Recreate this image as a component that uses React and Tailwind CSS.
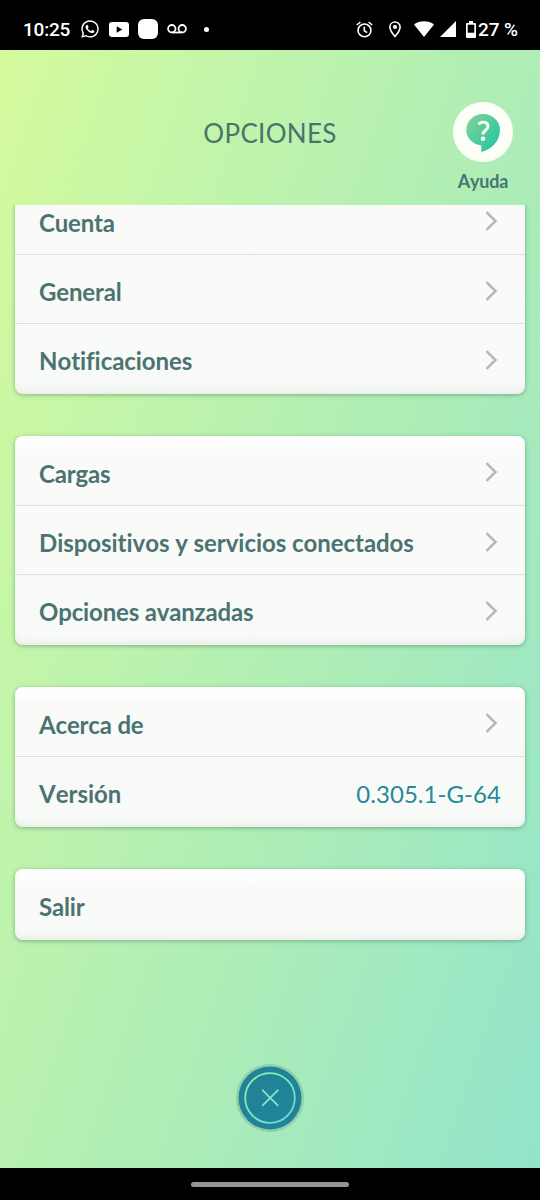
import React from "react";
import { FaWhatsapp } from "react-icons/fa";

const groups = [
  [
    { label: "Cuenta" },
    { label: "General" },
    { label: "Notificaciones", tracking: "tracking-[-0.06px]" },
  ],
  [
    { label: "Cargas" },
    { label: "Dispositivos y servicios conectados", tracking: "tracking-[-0.05px]" },
    { label: "Opciones avanzadas" },
  ],
  [
    { label: "Acerca de" },
    { label: "Versión", value: "0.305.1-G-64", tracking: "tracking-normal" },
  ],
  [{ label: "Salir", plain: true }],
];

function StatusBar() {
  return (
    <div className="flex h-[50px] shrink-0 items-center bg-black pt-[8px] pr-[22px] pl-[23px] font-['Roboto',sans-serif] text-[19px] font-medium text-white">
      <span className="w-[57px] pt-[2px] whitespace-nowrap tracking-[-0.2px]">10:25</span>
      <FaWhatsapp className="h-5 w-5 shrink-0" />
      <svg className="ml-[9px] h-[15px] w-5 shrink-0" viewBox="0 0 20 15">
        <rect width="20" height="15" rx="3" fill="#fff" />
        <path d="M7.7 4.2v6.6l5.6-3.3z" fill="#000" />
      </svg>
      <div className="ml-[9px] h-5 w-5 shrink-0 rounded-[6px] bg-white" />
      <svg className="ml-[9px] h-[10px] w-5 shrink-0" viewBox="0 0 20 10" fill="none" stroke="#fff" strokeWidth="1.8">
        <circle cx="4.8" cy="4.7" r="3.7" />
        <circle cx="15.2" cy="4.7" r="3.7" />
        <path d="M4.8 8.5h10.4" />
      </svg>
      <div className="ml-[17px] h-[5px] w-[5px] shrink-0 rounded-full bg-white" />
      <div className="flex-1" />
      <svg className="h-[17px] w-[17px] shrink-0" viewBox="0 0 17 17" fill="none" stroke="#fff" strokeWidth="1.6">
        <circle cx="8.5" cy="9.4" r="6.4" />
        <path d="M8.3 5.7v4.1l2.9 1.8M.8 4l3.6-3M16.2 4l-3.6-3" />
      </svg>
      <svg className="ml-[16px] h-[17px] w-[12px] shrink-0" viewBox="0 0 12 17">
        <path d="M6 1C3.1 1 .9 3.2.9 6c0 3.7 5.1 9.5 5.1 9.5S11.1 9.7 11.1 6C11.1 3.2 8.900 1 6 1z" fill="none" stroke="#fff" strokeWidth="1.6" />
        <circle cx="6" cy="6" r="2.1" fill="#fff" />
      </svg>
      <svg className="ml-[13px] h-[16px] w-[20px] shrink-0" viewBox="0 0 20 16">
        <path d="M0 3.500C5.500-.9 14.500-.9 20 3.500L10 16z" fill="#fff" />
      </svg>
      <svg className="ml-[6px] h-[16px] w-[16px] shrink-0" viewBox="0 0 16 16">
        <path d="M16 0v16H0z" fill="#fff" />
      </svg>
      <svg className="ml-[10px] h-[17px] w-[10px] shrink-0" viewBox="0 0 10 17">
        <path d="M3 0h4v2h2q1 0 1 1v13q0 1-1 1H1q-1 0-1-1V3q0-1 1-1h2z" fill="#fff" />
        <path d="M1.700 3.700h6.600v8H1.700z" fill="#000" />
      </svg>
      <span className="ml-[2px] w-[40px] pt-[2px] whitespace-nowrap tracking-[-0.1px]">27 %</span>
    </div>
  );
}

function HelpButton() {
  return (
    <button className="absolute top-[52px] right-[27px] flex w-[60px] flex-col items-center">
      <span className="flex h-[60px] w-[60px] items-center justify-center rounded-full bg-[#fbfff5]">
        <svg className="h-[60px] w-[60px]" viewBox="0 0 60 60">
          <defs>
            <linearGradient id="help" x1="0" y1="0" x2="1" y2="0.900">
              <stop offset="0.100" stopColor="#7bd29b" />
              <stop offset="1" stopColor="#22c49f" />
            </linearGradient>
          </defs>
          <path d="M30 12c-9.500 0-16.700 7-16.700 16 0 8 6.500 14.600 15 15.400V50c10.500-2.200 18.700-11.500 18.700-22 0-9-7.500-16-17-16z" fill="url(#help)" />
          <path d="M25.400 22.100c1.500-1.400 3-1.900 4.900-1.900 2.900 0 4.700 1.600 4.700 4 0 4-5 4.100-5 8.200" fill="none" stroke="#fbfff5" strokeWidth="3" />
          <circle cx="30" cy="36.700" r="2.300" fill="#fbfff5" />
        </svg>
      </span>
      <span className="mt-[7px] text-[18px] leading-6 font-bold tracking-[-0.2px] text-[#4a7573] [font-kerning:none]">Ayuda</span>
    </button>
  );
}

function Row({ item, first }) {
  return (
    <div
      className={
        first
          ? "flex h-[69px] items-center justify-between pr-[24px] pl-[24px]"
          : "flex h-[69px] items-center justify-between border-t border-[#dce0dd] pr-[24px] pl-[24px]"
      }
    >
      <span className={`pt-[6px] text-[24px] leading-8 font-bold text-[#4b7372] [font-kerning:none] ${item.tracking || "tracking-[-0.17px]"}`}>
        {item.label}
      </span>
      {item.value && <span className="pt-[5px] text-[24px] leading-8 tracking-[0.05px] text-[#25899b] [font-kerning:none]">{item.value}</span>}
      {!item.value && !item.plain && (
        <svg className="mt-[3px] mr-[2px] h-5 w-[14px]" viewBox="0 0 14 20" fill="none" stroke="#b5b8b6" strokeWidth="2.500">
          <path d="M1.500 1.200l9 8.800-9 8.800" />
        </svg>
      )}
    </div>
  );
}

export default function App() {
  return (
    <div className="flex h-[1200px] w-[540px] flex-col overflow-hidden bg-black font-['Lato',sans-serif]">
      <StatusBar />
      <div className="flex h-[1118px] flex-col bg-[linear-gradient(109deg,#d5fa9c_0%,#c2f5aa_26%,#aeedb6_58%,#92e4cb_100%)]">
        <header className="relative flex h-[155px] shrink-0 justify-center pt-[67px]">
          <h1 className="text-[26px] leading-8 tracking-[0.3px] text-[#46756c] [font-kerning:none]">OPCIONES</h1>
          <HelpButton />
        </header>
        <main className="flex h-[859px] flex-col overflow-hidden px-[15px]">
          <div className="-mt-[20px] flex flex-col gap-[42px]">
            {groups.map((items) => (
              <section
                key={items[0].label}
                className="rounded-[8px] bg-[linear-gradient(180deg,#ffffff_0px,#fafbf9_18px,#f8faf7_100%)] pb-[2px] shadow-[0_1px_4px_rgba(60,110,80,0.5),inset_0_-7px_8px_-5px_rgba(80,100,80,0.1)]"
              >
                {items.map((item, i) => (
                  <Row key={item.label} item={item} first={i === 0} />
                ))}
              </section>
            ))}
          </div>
        </main>
        <div className="flex justify-center">
          <button className="flex h-[68px] w-[68px] items-center justify-center rounded-full bg-[#8ed0ab]">
            <svg className="h-[64px] w-[64px]" viewBox="0 0 64 64" fill="none">
              <defs>
                <linearGradient id="ring" gradientUnits="userSpaceOnUse" x1="12" y1="10" x2="52" y2="54">
                  <stop stopColor="#91f0a6" />
                  <stop offset="1" stopColor="#64dcdc" />
                </linearGradient>
              </defs>
              <circle cx="32" cy="32" r="31.500" fill="#208397" />
              <circle cx="32" cy="32" r="24.800" stroke="url(#ring)" strokeWidth="1.800" />
              <path d="M24.700 24.300l15 15M39.700 24.300l-15 15" stroke="#83e8c3" strokeWidth="1.800" strokeLinecap="round" />
            </svg>
          </button>
        </div>
      </div>
      <footer className="flex h-[32px] shrink-0 justify-center bg-black pt-[14px]">
        <div className="h-[5px] w-[158px] rounded-full bg-[#969292]" />
      </footer>
    </div>
  );
}
